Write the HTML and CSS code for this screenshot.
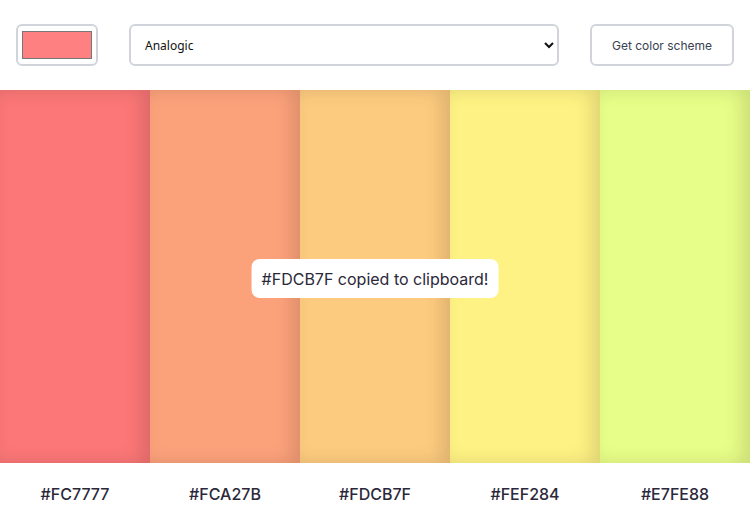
FILE: index.html
```html
<!DOCTYPE html>
<html lang="en">
<head>
<meta charset="utf-8">
<title>Color Scheme Generator</title>
<link rel="stylesheet" href="styles.css">
</head>
<body>
<header class="controls">
  <input class="seed" type="color" value="#ff8080">
  <select class="mode">
    <option>Analogic</option>
    <option>Monochrome</option>
    <option>Complement</option>
  </select>
  <button class="get-btn">Get color scheme</button>
</header>
<main class="scheme">
  <div class="col">
    <div class="swatch" style="background:#FC7777"></div>
    <p class="hex">#FC7777</p>
  </div>
  <div class="col">
    <div class="swatch" style="background:#FCA27B"></div>
    <p class="hex">#FCA27B</p>
  </div>
  <div class="col">
    <div class="swatch" style="background:#FDCB7F"></div>
    <p class="hex">#FDCB7F</p>
  </div>
  <div class="col">
    <div class="swatch" style="background:#FEF284"></div>
    <p class="hex">#FEF284</p>
  </div>
  <div class="col">
    <div class="swatch" style="background:#E7FE88"></div>
    <p class="hex">#E7FE88</p>
  </div>
  <div class="toast">#FDCB7F copied to clipboard!</div>
</main>
</body>
</html>
```
FILE: styles.css
```css
* { box-sizing: border-box; }
html, body { height: 100%; }
body {
  margin: 0;
  font-family: Inter, "Liberation Sans", sans-serif;
  color: #2b283a;
  background: #fff;
  display: flex;
  flex-direction: column;
}
.controls {
  height: 90px;
  display: flex;
  align-items: center;
  gap: 31px;
  padding: 0 16px;
  flex-shrink: 0;
}
.seed {
  width: 82px;
  height: 42px;
  border: 2px solid #d1d5db;
  border-radius: 6px;
  padding: 1px 2px;
  background: #fff;
  margin: 0;
}
.mode {
  flex: 1;
  height: 42px;
  border: 2px solid #d1d5db;
  border-radius: 6px;
  padding: 0 10px;
  background: #fff;
  font-family: "Noto Sans", sans-serif;
  font-size: 12px;
  color: #111;
  margin: 0;
}
.get-btn {
  width: 144px;
  height: 42px;
  border: 2px solid #d1d5db;
  border-radius: 6px;
  background: #fff;
  font-family: Inter, sans-serif;
  font-size: 12px;
  color: #374151;
  margin: 0;
}
.scheme {
  flex: 1;
  display: grid;
  grid-template-columns: repeat(5, 1fr);
  position: relative;
}
.col {
  display: flex;
  flex-direction: column;
}
.swatch {
  flex: 1;
  box-shadow: inset -8px 0 18px rgba(0, 0, 0, 0.13);
}
.hex {
  margin: 0;
  height: 62px;
  display: flex;
  align-items: center;
  justify-content: center;
  font-size: 16px;
  font-weight: 500;
}
.toast {
  position: absolute;
  left: 50%;
  top: 169px;
  transform: translateX(-50%);
  background: #fff;
  border-radius: 8px;
  padding: 0 10px;
  height: 39px;
  display: flex;
  align-items: center;
  font-size: 16px;
  white-space: nowrap;
}
```
